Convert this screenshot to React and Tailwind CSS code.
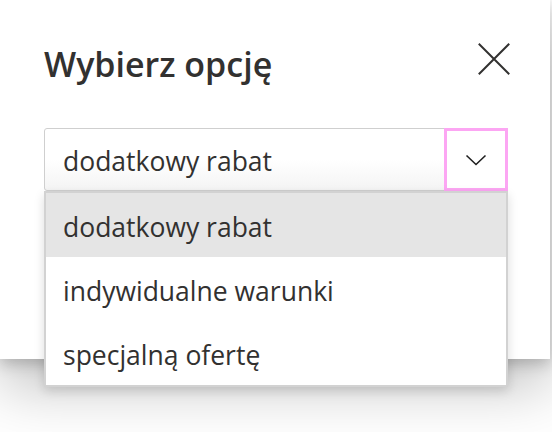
import React from "react";

const items = ["dodatkowy rabat", "indywidualne warunki", "specjalną ofertę"];

export default function App() {
  return (
    <div
      className="relative w-[552px] h-[432px] bg-white overflow-hidden text-[#323130]"
      style={{ fontFamily: '"Open Sans", "Noto Sans", sans-serif' }}
    >
      <div className="relative w-[550px] h-[359px] bg-white shadow-[0_26px_58px_rgba(0,0,0,0.26),0_5px_14px_rgba(0,0,0,0.2)]">
        <div className="flex items-start justify-between pl-[44px] pr-[40px] pt-[44px]">
          <h1 className="text-[34px] leading-[40px] font-semibold">Wybierz opcję</h1>
          <button className="w-[32px] h-[32px] -mt-[1px] text-[#323130]" aria-label="Zamknij">
            <svg viewBox="0 0 32 32" width="32" height="32" fill="none" stroke="currentColor" strokeWidth="2" strokeLinecap="square">
              <path d="M1.5 1.5 L30.5 30.5 M30.5 1.5 L1.5 30.5" />
            </svg>
          </button>
        </div>
        <div className="ml-[44px] mt-[44px] w-[464px] h-[63px] flex rounded-[3px] border border-[#cfcfcf] bg-gradient-to-b from-white via-white to-[#f4f4f4]">
          <div className="flex-1 pl-[18px] pt-[3px] text-[26.5px] leading-[59px]">dodatkowy rabat</div>
          <div className="-mt-px -mb-px -mr-px w-[64px] h-[63px] border-[3px] border-[#fca6f3] bg-white flex items-center justify-center">
            <svg viewBox="0 0 22 12" width="22" height="12" fill="none" stroke="#1f1f1f" strokeWidth="1.6">
              <path d="M1.5 1.5 L11 10.5 L20.5 1.5" />
            </svg>
          </div>
        </div>
      </div>
      <div className="absolute left-[44px] top-[191px] w-[464px] border-2 border-[#d2d2d2] bg-white shadow-[0_4px_10px_rgba(0,0,0,0.14)]">
        {items.map((t, i) => (
          <div
            key={t}
            className={
              i === 0
                ? "h-[64px] pl-[17px] pt-[4px] text-[26.5px] leading-[60px] bg-[#e5e5e5]"
                : "h-[64px] pl-[17px] pt-[4px] text-[26.5px] leading-[60px] bg-white"
            }
          >
            {t}
          </div>
        ))}
      </div>
    </div>
  );
}
